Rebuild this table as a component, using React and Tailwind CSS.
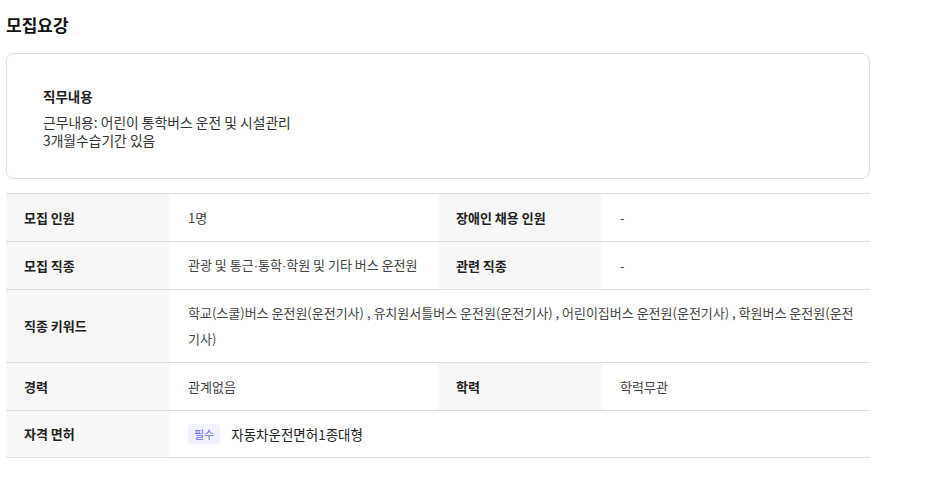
import React from "react";

const Label = ({ children }) => (
  <div className="bg-[#f7f7f7] px-[18px] py-[10px] flex items-center font-bold text-[#222]">{children}</div>
);

const Value = ({ children, className = "" }) => (
  <div className={"py-[10px] flex items-center text-[#444] " + className}>{children}</div>
);

// narrow middle dot (CJK font draws it full width)
const Dot = () => <span style={{ fontFamily: '"Liberation Sans", sans-serif' }}>·</span>;

const App = () => {
  return (
    <div
      className="w-[951px] h-[490px] bg-white pl-[6px] pt-[12px] text-[13px] leading-[26px]"
      style={{ fontFamily: '"Noto Sans CJK KR", "Noto Sans", sans-serif' }}
    >
      {/* title */}
      <h2 className="text-[17px] font-bold text-[#111] leading-[26px]">모집요강</h2>

      {/* 직무내용 card */}
      <div className="mt-[15px] w-[864px] h-[126px] border border-[#dddddd] rounded-lg pl-[36px] pt-[32px]">
        <div className="font-bold text-[13.5px] text-[#222] leading-[20px]">직무내용</div>
        <div className="mt-[7px] text-[13.8px] text-[#333] leading-[18px]">
          <p>근무내용: 어린이 통학버스 운전 및 시설관리</p>
          <p>3개월수습기간 있음</p>
        </div>
      </div>

      {/* table */}
      <div className="mt-[14px] w-[864px] border-t border-[#dddddd]">
        <div className="grid grid-cols-[164px_268px_164px_268px] min-h-[48px] border-b border-[#dddddd]">
          <Label>모집 인원</Label>
          <Value className="px-[18px]">1명</Value>
          <Label>장애인 채용 인원</Label>
          <Value className="px-[18px]">-</Value>
        </div>
        <div className="grid grid-cols-[164px_268px_164px_268px] min-h-[48px] border-b border-[#dddddd]">
          <Label>모집 직종</Label>
          <Value className="px-[18px]">
            <span>
              관광 및 통근<Dot />통학<Dot />학원 및 기타 버스 운전원
            </span>
          </Value>
          <Label>관련 직종</Label>
          <Value className="px-[18px]">-</Value>
        </div>
        <div className="grid grid-cols-[164px_700px] border-b border-[#dddddd]">
          <Label>직종 키워드</Label>
          <Value className="pl-[18px] pr-[16px]">
            <span>
              학교(스쿨)버스 운전원(운전기사) , 유치원서틀버스 운전원(운전기사) , 어린이집버스 운전원(운전기사) , 학원버스 운전원(운전기사)
            </span>
          </Value>
        </div>
        <div className="grid grid-cols-[164px_268px_164px_268px] min-h-[48px] border-b border-[#dddddd]">
          <Label>경력</Label>
          <Value className="px-[18px]">관계없음</Value>
          <Label>학력</Label>
          <Value className="px-[18px]">학력무관</Value>
        </div>
        <div className="grid grid-cols-[164px_700px] border-b border-[#dddddd]">
          <Label>자격 면허</Label>
          <Value className="px-[18px]">
            <span className="inline-flex items-center h-[20px] px-[6px] rounded bg-[#f0f1ff] text-[#6b6fe0] text-[11px] leading-[20px]">
              필수
            </span>
            <span className="ml-[11px] text-[13.5px] text-[#222]">자동차운전면허1종대형</span>
          </Value>
        </div>
      </div>
    </div>
  );
};

export default App;
